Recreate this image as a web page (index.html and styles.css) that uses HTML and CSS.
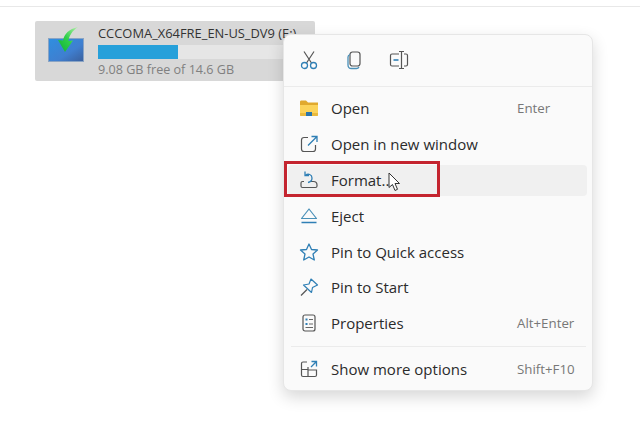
FILE: index.html
```html
<!DOCTYPE html>
<html lang="en">
<head>
<meta charset="utf-8">
<title>Drive context menu</title>
<link rel="stylesheet" href="styles.css">
</head>
<body>
<div class="topline"></div>
<div class="drive">
  <svg class="drive-icon" width="36" height="36" viewBox="0 0 36 36">
    <defs>
      <linearGradient id="dg" x1="0" y1="0" x2="1" y2="1"><stop offset="0" stop-color="#2f8fe0"/><stop offset=".6" stop-color="#3f7fd0"/><stop offset="1" stop-color="#3a5f9c"/></linearGradient>
      <linearGradient id="ag" x1="1" y1="0" x2="0" y2="1"><stop offset="0" stop-color="#b4f2a8"/><stop offset=".5" stop-color="#2fd04a"/><stop offset="1" stop-color="#0fae35"/></linearGradient>
    </defs>
    <rect x="0.500" y="11.500" width="35" height="23" fill="url(#dg)" stroke="#8aa4c4"/>
    <path d="M30 0C21 2 16 7 15 13.500L10 13 17 25 25 13.500 20.500 14C21 9 24 4 30 0Z" fill="url(#ag)"/>
  </svg>
  <div class="drive-info">
    <div class="drive-name">CCCOMA_X64FRE_EN-US_DV9 (E:)</div>
    <div class="bar"><div class="bar-fill"></div></div>
    <div class="drive-free">9.08 GB free of 14.6 GB</div>
  </div>
</div>

<div class="menu">
  <div class="toolbar">
    <svg class="ico" viewBox="0 0 20 20"><path d="M5 1.500 12.500 13M15 1.500 7.500 13" stroke="#555" fill="none" stroke-width="1.200"/><circle cx="5.500" cy="15.500" r="3" fill="none" stroke="#2f7fb5" stroke-width="1.300"/><circle cx="14.500" cy="15.500" r="3" fill="none" stroke="#2f7fb5" stroke-width="1.300"/></svg>
    <svg class="ico" viewBox="0 0 20 20"><rect x="6" y="2" width="10" height="14" rx="2.500" fill="none" stroke="#555" stroke-width="1.200"/><path d="M6 4.500C4.500 5 4 6 4 7V15C4 17 5.500 18.500 7.500 18.500H12.500C13.500 18.500 14.500 18 15 17" fill="none" stroke="#4a90b8" stroke-width="1.300"/></svg>
    <svg class="ico" viewBox="0 0 20 20"><path d="M10 4H3C2 4 1.500 4.500 1.500 5.500V14.500C1.500 15.500 2 16 3 16H10M15 4H17C18 4 18.500 4.500 18.500 5.500V14.500C18.500 15.500 18 16 17 16H15" fill="none" stroke="#555" stroke-width="1.200"/><path d="M10 1.500H15M12.500 1.500V18.500M10 18.500H15" fill="none" stroke="#555" stroke-width="1.200"/><path d="M4.500 10H9.500" stroke="#2f7fb5" stroke-width="1.600"/></svg>
  </div>
  <div class="sep"></div>
  <ul class="items">
    <li class="item"><svg class="ico" viewBox="0 0 20 20"><path d="M1 4C1 3 1.500 2.500 2.500 2.500H7L9 4.500H19V8H1Z" fill="#e0a92e"/><path d="M1 7H19V17C19 17.500 18.500 18 18 18H2C1.500 18 1 17.500 1 17Z" fill="#fbd35a"/><path d="M7 14H13V18H7Z" fill="#2a76ad"/><path d="M1 15H7V18H2C1.500 18 1 17.500 1 17ZM13 15H19V17C19 17.500 18.500 18 18 18H13Z" fill="#e9b93d"/></svg><span class="label">Open</span><span class="key">Enter</span></li>
    <li class="item"><svg class="ico" viewBox="0 0 20 20"><path d="M9 3.500H5C3.500 3.500 2.500 4.500 2.500 6V15C2.500 16.500 3.500 17.500 5 17.500H14C15.500 17.500 16.500 16.500 16.500 15V11" fill="none" stroke="#555" stroke-width="1.200"/><path d="M12.500 2.500H18V8M18 2.500 9 11.500" fill="none" stroke="#2f7fb5" stroke-width="1.300"/></svg><span class="label">Open in new window</span></li>
    <li class="item hover"><svg class="ico" viewBox="0 0 20 20"><path d="M5 11.500H3.500C2.500 11.500 2 12 2 13V16C2 17 2.500 17.500 3.500 17.500H16.500C17.500 17.500 18 17 18 16V15C18 13 16.500 11.500 14.500 11.500H12" fill="none" stroke="#555" stroke-width="1.200"/><path d="M6 1.500V5.500H10M6.500 5.500C9 3 13 4.500 13 8C13 10.500 11.500 12 9 12.500" fill="none" stroke="#2f7fb5" stroke-width="1.300"/></svg><span class="label">Format...</span></li>
    <li class="item"><svg class="ico" viewBox="0 0 20 20"><path d="M10 3 17.500 12.500H2.500Z" fill="none" stroke="#4a90b8" stroke-width="1.200" stroke-linejoin="round"/><path d="M2.500 16.500H17.500" stroke="#2f7fb5" stroke-width="1.500"/></svg><span class="label">Eject</span></li>
    <li class="item"><svg class="ico" viewBox="0 0 20 20"><path d="M10 2 12.500 7.500 18.500 8 14 12 15.300 18 10 15 4.700 18 6 12 1.500 8 7.500 7.500Z" fill="none" stroke="#2f7fb5" stroke-width="1.300" stroke-linejoin="round"/></svg><span class="label">Pin to Quick access</span></li>
    <li class="item"><svg class="ico" viewBox="0 0 20 20"><path d="M12 2 18.500 8 13.500 10.500 12.500 15.500 4.500 8 10 7Z" fill="none" stroke="#2f7fb5" stroke-width="1.200" stroke-linejoin="round"/><path d="M8 12.500 2 18.500" stroke="#555" stroke-width="1.200"/></svg><span class="label">Pin to Start</span></li>
    <li class="item"><svg class="ico" viewBox="0 0 20 20"><rect x="4" y="2" width="12" height="16" rx="2" fill="none" stroke="#555" stroke-width="1.200"/><path d="M6.500 6.500H8.500M6.500 11H8.500" stroke="#2f7fb5" stroke-width="2"/><path d="M10 6.500H14M10 11H14M6.500 14.500H14" stroke="#666" stroke-width="1"/></svg><span class="label">Properties</span><span class="key">Alt+Enter</span></li>
  </ul>
  <div class="sep sep-inset"></div>
  <div class="item last"><svg class="ico" viewBox="0 0 20 20"><path d="M8 3H4C3 3 2.500 3.500 2.500 4.500V16C2.500 17 3 17.500 4 17.500H16C17 17.500 17.500 17 17.500 16V11H9V17.500M2.500 10.500H9V8" fill="none" stroke="#555" stroke-width="1.200"/><path d="M12.500 2.500H17.500V7.500M17.500 2.500 12 8" fill="none" stroke="#2f7fb5" stroke-width="1.300"/></svg><span class="label">Show more options</span><span class="key">Shift+F10</span></div>
</div>

<div class="callout"></div>
<svg class="cursor" width="13" height="20" viewBox="0 0 13 20"><path d="M1 1V15.500L4.500 12.500 7 18.500 9.500 17.300 7 11.500H11.500Z" fill="#fff" stroke="#333" stroke-width="1"/></svg>
</body>
</html>
```
FILE: styles.css
```css
html, body { margin: 0; padding: 0; }
body {
  width: 640px;
  height: 441px;
  position: relative;
  overflow: hidden;
  background: #fff;
  font-family: "Open Sans", "Noto Sans", sans-serif;
  color: #2b2b2b;
}
.topline { height: 1px; margin-top: 6px; background: #e8e8e8; }
.drive {
  display: flex;
  align-items: center;
  gap: 14px;
  box-sizing: border-box;
  width: 280px;
  height: 60px;
  margin: 14px 0 0 35px;
  padding: 0 0 0 13px;
  background: #d8d8d8;
  border-radius: 2px;
}
.drive-icon { flex: none; margin-bottom: 12px; }
.drive-info { flex: 1; padding-right: 8px; }
.drive-name { font-size: 12.900px; line-height: 17px; white-space: nowrap; color: #333; }
.bar { height: 14px; background: #e6e6e6; margin: 3px 0 2px; }
.bar-fill { width: 80px; height: 100%; background: #26a0da; }
.drive-free { font-size: 12.600px; line-height: 17px; color: #808080; }

.menu {
  position: absolute;
  left: 283px;
  top: 34px;
  width: 310px;
  height: 357px;
  box-sizing: border-box;
  background: #fafafa;
  border: 1px solid #e6e6e6;
  border-radius: 8px;
  box-shadow: 0 6px 16px rgba(0, 0, 0, .16);
}
.toolbar {
  display: flex;
  align-items: center;
  gap: 25px;
  box-sizing: border-box;
  height: 51px;
  padding: 0 0 2px 15px;
}
.ico { width: 20px; height: 20px; flex: none; }
.sep { height: 1px; background: #ebebeb; }
.sep-inset { margin: 4.400px 0 0 7px; width: 295px; }
.items { list-style: none; margin: 3px 0 0; padding: 0; }
.item {
  display: flex;
  align-items: center;
  height: 35.800px;
  margin: 0 5px 0 4px;
  padding: 0 0 0 11px;
  border-radius: 4px;
  font-size: 15px;
}
.item .ico { margin-right: 12px; }
.hover { background: #f0f0f0; height: 31px; margin-top: 3.400px; margin-bottom: 2px; }
.last { margin-top: 5px; }
.label { flex: 1; white-space: nowrap; }
.key { width: 70px; font-size: 13.300px; color: #777; white-space: nowrap; }
.callout {
  position: absolute;
  left: 284px;
  top: 161px;
  width: 150px;
  height: 30px;
  border: 3px solid #c4242f;
}
.cursor { position: absolute; left: 388px; top: 172px; }
```
